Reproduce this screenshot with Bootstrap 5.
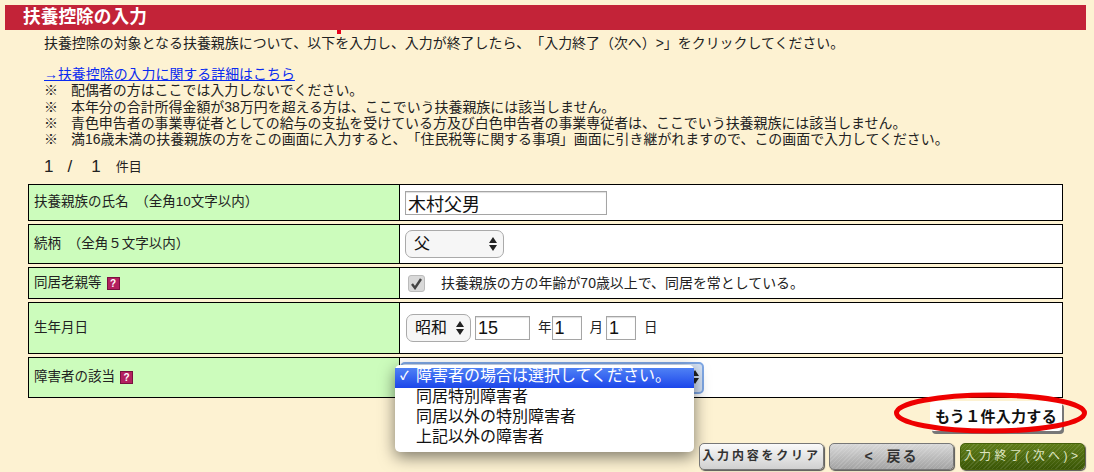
<!DOCTYPE html>
<html lang="ja">
<head>
<meta charset="utf-8">
<title>扶養控除の入力</title>
<link href="https://cdn.jsdelivr.net/npm/bootstrap@5.3.0/dist/css/bootstrap.min.css" rel="stylesheet">
<style>
html,body{height:472px;overflow:hidden}
body{background:#fdf2d2;color:#222;font-family:"Liberation Sans","Noto Sans CJK JP",sans-serif;font-size:13.95px;line-height:16.2px;position:relative;text-spacing-trim:space-all}
.title-bar{margin:5px 8px 0 5px;height:25px;background:#c32338;color:#fff;font-weight:700;font-size:17.7px;line-height:25px;padding-left:18px;position:relative}
.title-tick{position:absolute;left:332px;top:25px;width:4px;height:4px;background:#e8001c}
.intro{padding:5px 0 0 44px;height:128px;white-space:nowrap}
.intro a{color:#0a2bf0}
.gapline{height:15px}
.mk{display:inline-block;width:27px}
.count{margin-left:44px;height:19px;display:flex;align-items:center;font-size:13px}
.count b{font-weight:400;font-size:17px;font-family:"Liberation Sans",sans-serif}
.cn1{margin-right:14px}.cn2{margin-right:19px}.cn3{margin-right:15px}
.frm{margin:7px 31px 0 28px}
.frow{border:1px solid #000;margin-bottom:3px;display:flex;background:#fff}
.lab{width:371px;background:#ccfcbc;border-right:1px solid #000;padding-left:5px;flex:none;font-size:13.5px;word-spacing:3px}
.val{padding-left:5px;flex:1}
.tx{border:1px solid #a5a5a5;height:24px;background:#fff;font-size:18px;padding:0 0 0 2px;color:#111;border-radius:0;outline:0;box-shadow:inset 0 1px 1px #ddd}
.w-name{width:202px}.w-year{width:55px;margin-left:4px}.w-day{width:30px}
.sel-wrap{position:relative;display:inline-block}
.mac-sel{appearance:none;-webkit-appearance:none;border:1px solid #aaa;border-radius:7px;background:#f6f6f6;height:28px;font-size:16px;padding:0 0 0 8px;color:#111;display:block;font-family:inherit}
.sel-wrap svg{position:absolute;top:7px;right:7px}
.hlp{display:inline-block;width:13px;height:13px;background:#b3205f;color:#fff;font-size:10px;font-weight:700;line-height:13px;text-align:center;margin-left:5px;vertical-align:3px;box-shadow:inset 0 0 0 1px #7a1040}
.chk{width:17px;height:17px;border-radius:3px;background:#d9d9d9;border:1px solid #bbb;flex:none}
.unit{font-size:13.5px}
.focus-sel{position:absolute;left:400px;top:362px;width:304px;height:32px;border-radius:5px;background:#d5e2f5;border:2px solid #7fa8e6}
.focus-sel svg{position:absolute;right:3px;top:6px}
.popup{position:absolute;left:395px;top:365px;width:299px;height:87px;background:#fff;border-radius:5px;box-shadow:0 5px 16px rgba(0,0,0,.5);padding-top:3px;font-size:16px;line-height:16px;color:#111}
.popup div{padding:1px 0 0 21px;height:20px;white-space:nowrap}
.popup .on{background:linear-gradient(#4f81f5,#1c46ea);color:#fff;position:relative;padding-top:0}
.on i{position:absolute;left:5px;top:0;font-style:normal;font-size:12px;font-weight:700}
.ring{position:absolute;left:893px;top:392px;pointer-events:none}
.more{position:absolute;left:930px;top:401px;width:132px;height:30px;background:#fff;border-radius:4px;box-shadow:2px 3px 0 #777;font-weight:700;font-size:15px;line-height:30px;text-align:center;color:#111;letter-spacing:.3px;padding:0;white-space:nowrap}
.actions{position:absolute;left:699px;top:443px;display:flex;gap:5px}
.act{height:27px;width:125px;border:1px solid #777;border-radius:5px;font-size:12px;font-weight:700;line-height:25px;letter-spacing:2.8px;text-align:center;padding:0;box-shadow:1px 1px 1px #555;color:#333;white-space:nowrap}
.a-clear{background:linear-gradient(#fafafa,#d0d0d0)}
.a-back{background:repeating-linear-gradient(135deg,rgba(255,255,255,.12) 0 1px,transparent 1px 3px),linear-gradient(#d8d8d8,#a3a3a3);margin-right:1px;font-size:14px;letter-spacing:2px}
.a-next{background:repeating-linear-gradient(135deg,rgba(255,255,255,.1) 0 1px,transparent 1px 3px),linear-gradient(#5f7d18,#3a5606);color:#dfe5c0;border-color:#45600c;letter-spacing:3.4px;font-weight:400}
</style>
</head>
<body>
<div class="title-bar">扶養控除の入力<span class="title-tick"></span></div>
<div class="intro">
<div>扶養控除の対象となる扶養親族について、以下を入力し、入力が終了したら、「入力終了（次へ）&gt;」をクリックしてください。</div>
<div class="gapline"></div>
<div><a href="#">→扶養控除の入力に関する詳細はこちら</a></div>
<div><span class="mk">※</span>配偶者の方はここでは入力しないでください。</div>
<div><span class="mk">※</span>本年分の合計所得金額が38万円を超える方は、ここでいう扶養親族には該当しません。</div>
<div><span class="mk">※</span>青色申告者の事業専従者としての給与の支払を受けている方及び白色申告者の事業専従者は、ここでいう扶養親族には該当しません。</div>
<div><span class="mk">※</span>満16歳未満の扶養親族の方をこの画面に入力すると、「住民税等に関する事項」画面に引き継がれますので、この画面で入力してください。</div>
</div>
<div class="count"><b class="cn1">1</b><b class="cn2">/</b><b class="cn3">1</b><span>件目</span></div>
<div class="frm">
<div class="frow" style="height:37px">
<div class="lab d-flex align-items-center">扶養親族の氏名 （全角10文字以内）</div>
<div class="val d-flex align-items-center"><input class="tx w-name" value="木村父男"></div>
</div>
<div class="frow" style="height:40px">
<div class="lab d-flex align-items-center">続柄 （全角５文字以内）</div>
<div class="val d-flex align-items-center"><span class="sel-wrap"><select class="mac-sel" style="width:99px"><option>父</option></select><svg width="8" height="14" viewBox="0 0 8 14"><path d="M4 0 8 6H0zM4 14 0 8h8z" fill="#222"/></svg></span></div>
</div>
<div class="frow" style="height:32px">
<div class="lab d-flex align-items-center">同居老親等<span class="hlp">?</span></div>
<div class="val d-flex align-items-center gap-3 ps-2"><span class="chk d-flex align-items-center justify-content-center"><svg width="13" height="13" viewBox="0 0 13 13"><path d="M2 7 5 11 11 2" fill="none" stroke="#444" stroke-width="2.4"/></svg></span><span class="chk-text">扶養親族の方の年齢が70歳以上で、同居を常としている。</span></div>
</div>
<div class="frow" style="height:52px">
<div class="lab d-flex align-items-center">生年月日</div>
<div class="val d-flex align-items-center unit"><span class="sel-wrap ms-0"><select class="mac-sel" style="width:65px;margin-left:1px"><option>昭和</option></select><svg width="8" height="14" viewBox="0 0 8 14"><path d="M4 0 8 6H0zM4 14 0 8h8z" fill="#222"/></svg></span><input class="tx w-year" value="15"><span class="ms-2 me-0">年</span><input class="tx w-day" value="1"><span style="margin:0 3px 0 8px">月</span><input class="tx w-day" value="1"><span class="ms-2">日</span></div>
</div>
<div class="frow" style="height:41px">
<div class="lab d-flex align-items-center">障害者の該当<span class="hlp">?</span></div>
<div class="val"></div>
</div>
</div>
<div class="focus-sel"><svg width="8" height="14" viewBox="0 0 8 14"><path d="M4 0 8 6H0zM4 14 0 8h8z" fill="#222"/></svg></div>
<div class="popup">
<div class="on"><i>✓</i>障害者の場合は選択してください。</div>
<div>同居特別障害者</div>
<div>同居以外の特別障害者</div>
<div>上記以外の障害者</div>
</div>
<button type="button" class="btn more">もう１件入力する</button>
<svg class="ring" width="195" height="42" viewBox="0 0 195 42"><ellipse cx="97.5" cy="21" rx="94" ry="18" fill="none" stroke="#ee0000" stroke-width="5"/></svg>
<div class="actions">
<button type="button" class="btn act a-clear">入力内容をクリア</button>
<button type="button" class="btn act a-back">&lt;&nbsp;&nbsp;戻る</button>
<button type="button" class="btn act a-next">入力終了(次へ)&gt;</button>
</div>
</body>
</html>
